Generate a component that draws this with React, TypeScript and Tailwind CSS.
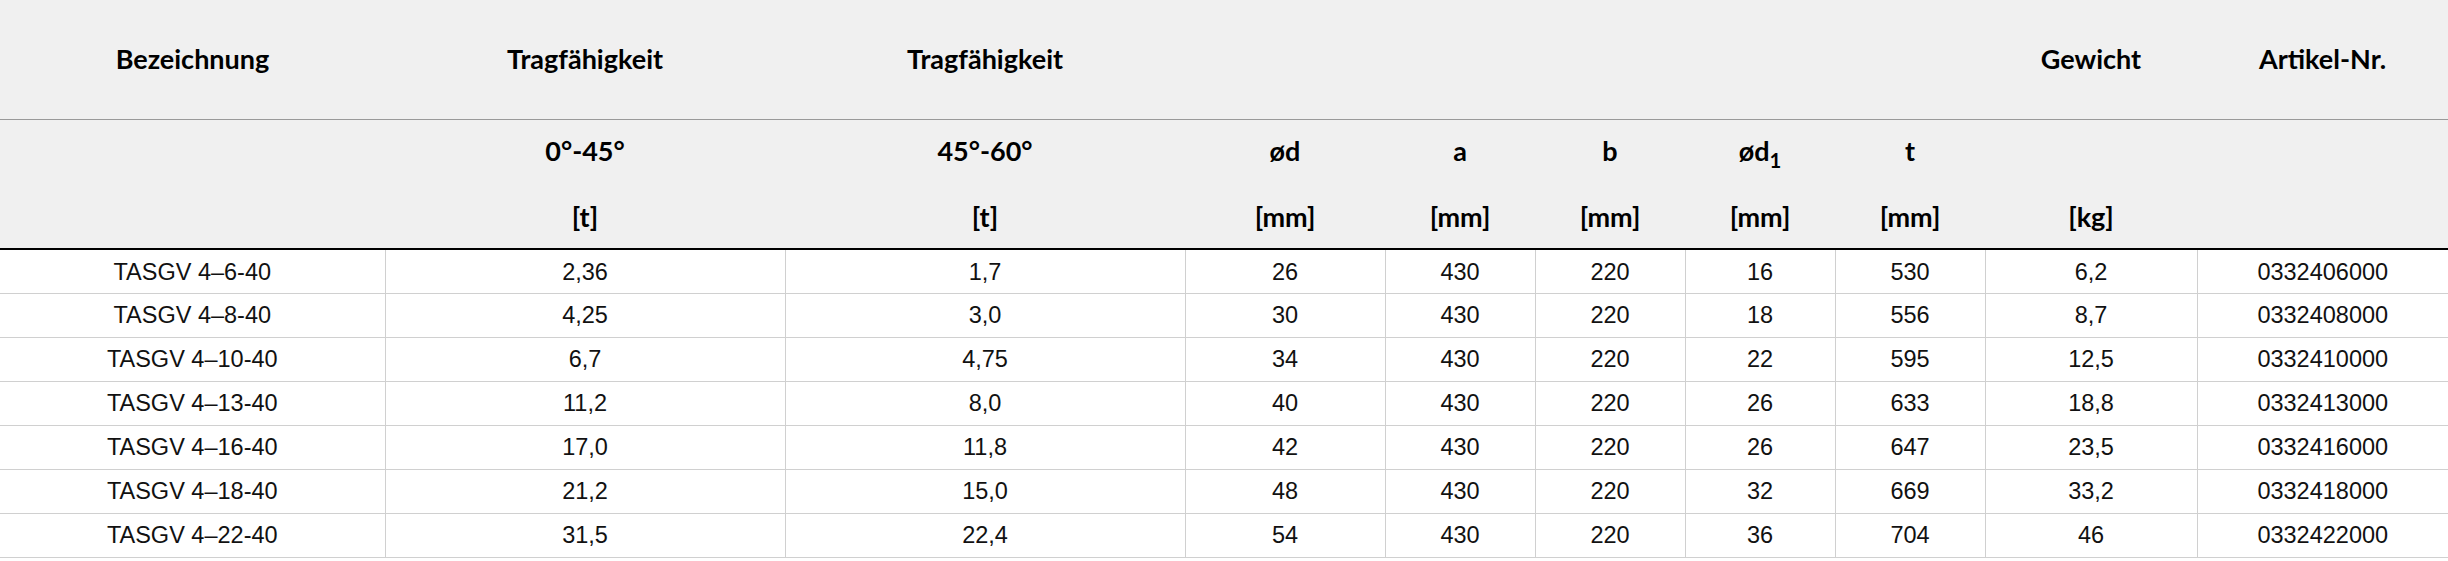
const widths = [
  "w-[385px]",
  "w-[400px]",
  "w-[400px]",
  "w-[200px]",
  "w-[150px]",
  "w-[150px]",
  "w-[150px]",
  "w-[150px]",
  "w-[212px]",
  "w-[251px]",
];

const top = ["Bezeichnung", "Tragfähigkeit", "Tragfähigkeit", "", "", "", "", "", "Gewicht", "Artikel-Nr."];

const sub: [React.ReactNode, string][] = [
  ["", ""],
  ["0°-45°", "[t]"],
  ["45°-60°", "[t]"],
  ["ød", "[mm]"],
  ["a", "[mm]"],
  ["b", "[mm]"],
  [
    <>
      ød<span className="relative top-[7px] text-[0.75em]">1</span>
    </>,
    "[mm]",
  ],
  ["t", "[mm]"],
  ["", "[kg]"],
  ["", ""],
];

const rows = [
  ["TASGV 4–6-40", "2,36", "1,7", "26", "430", "220", "16", "530", "6,2", "0332406000"],
  ["TASGV 4–8-40", "4,25", "3,0", "30", "430", "220", "18", "556", "8,7", "0332408000"],
  ["TASGV 4–10-40", "6,7", "4,75", "34", "430", "220", "22", "595", "12,5", "0332410000"],
  ["TASGV 4–13-40", "11,2", "8,0", "40", "430", "220", "26", "633", "18,8", "0332413000"],
  ["TASGV 4–16-40", "17,0", "11,8", "42", "430", "220", "26", "647", "23,5", "0332416000"],
  ["TASGV 4–18-40", "21,2", "15,0", "48", "430", "220", "32", "669", "33,2", "0332418000"],
  ["TASGV 4–22-40", "31,5", "22,4", "54", "430", "220", "36", "704", "46", "0332422000"],
];

export default function App() {
  return (
    <div className="w-[2448px] h-[561px] overflow-hidden bg-white">
      <table className="table-fixed border-collapse w-[2448px]">
        <thead className="bg-[#f0f0f0] font-['Lato','Open_Sans',sans-serif] text-[27px] font-bold text-black">
          <tr className="border-b border-[#999999]">
            {top.map((t, i) => (
              <th key={i} className={`${widths[i]} h-[119px] p-0 text-center align-middle font-bold`}>
                {t}
              </th>
            ))}
          </tr>
          <tr className="border-b-2 border-black">
            {sub.map(([a, b], i) => (
              <th key={i} className="h-[130px] p-0 text-center align-middle font-bold">
                <div className="flex flex-col gap-[33px]">
                  <div className="h-[33px] leading-[33px]">{a}</div>
                  <div className="h-[33px] leading-[33px]">{b}</div>
                </div>
              </th>
            ))}
          </tr>
        </thead>
        <tbody className="font-['Liberation_Sans','Arial',sans-serif] text-[23.5px] text-[#111]">
          {rows.map((r, ri) => (
            <tr key={ri} className="border-b border-[#d0d0d0]">
              {r.map((c, ci) => (
                <td
                  key={ci}
                  className={`h-[44px] p-0 pt-[2px] text-center align-middle leading-none ${
                    ci > 0 ? "border-l border-[#d0d0d0]" : ""
                  }`}
                >
                  {c}
                </td>
              ))}
            </tr>
          ))}
        </tbody>
      </table>
    </div>
  );
}
